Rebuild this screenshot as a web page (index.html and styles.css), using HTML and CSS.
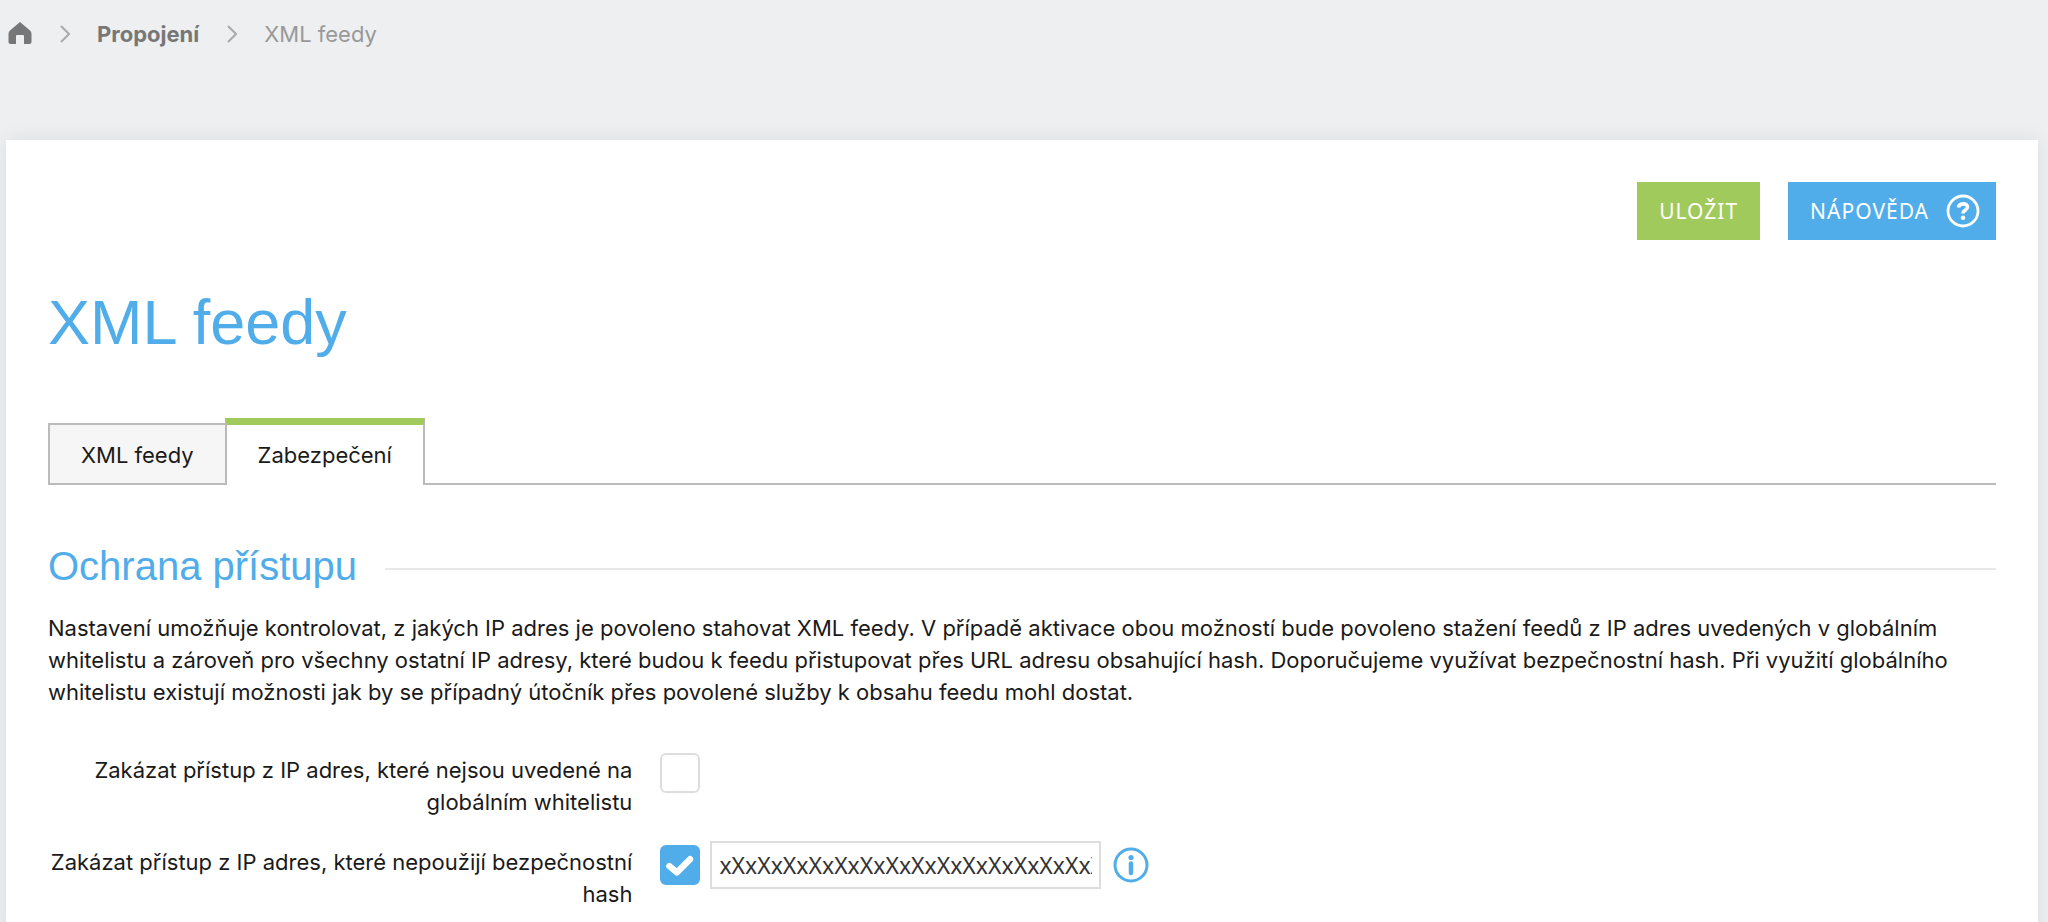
FILE: index.html
```html
<!DOCTYPE html>
<html lang="cs">
<head>
    <meta charset="UTF-8">
    <meta name="viewport" content="width=device-width, initial-scale=1">
    <title>XML feedy</title>
    <link rel="stylesheet" href="styles.css">
</head>
<body>
    <nav class="breadcrumbs">
        <a href="#" class="home" aria-label="Domů">
            <svg width="24" height="24" viewBox="0 0 24 24"><path d="M12 0 L22 8.500 Q23.500 9.800 23.500 12 V20 Q23.500 22 21.500 22 H16 V14 Q16 13 15 13 H9 Q8 13 8 14 V22 H2.500 Q0.500 22 0.500 20 V12 Q0.500 9.800 2 8.500 Z" fill="#777"/></svg>
        </a>
        <svg class="arrow" width="10" height="18" viewBox="0 0 10 18"><path d="M1 1 L9 9 L1 17"/></svg>
        <a href="#" class="parent">Propojení</a>
        <svg class="arrow" width="10" height="18" viewBox="0 0 10 18"><path d="M1 1 L9 9 L1 17"/></svg>
        <span>XML feedy</span>
    </nav>

    <main class="content">
        <div class="actions">
            <button type="submit" form="security" class="btn btn-save">Uložit</button>
            <button type="button" class="btn btn-help">Nápověda
                <svg width="34" height="34" viewBox="0 0 34 34" fill="none" stroke="#fff">
                    <circle cx="17" cy="17" r="15" stroke-width="2.800"/>
                    <path d="M12.500 13.500 C13 9 21.500 8.500 21.500 13 C21.500 16 17 16 17 19.500" stroke-width="3.600"/>
                    <circle cx="17" cy="23.800" r="2.200" fill="#fff" stroke="none"/>
                </svg>
            </button>
        </div>

        <h1>XML feedy</h1>

        <div class="tabs">
            <a href="#" class="tab">XML feedy</a>
            <a href="#" class="tab active">Zabezpečení</a>
        </div>

        <h2>Ochrana přístupu</h2>
        <p>Nastavení umožňuje kontrolovat, z jakých IP adres je povoleno stahovat XML feedy. V případě aktivace obou možností bude povoleno stažení feedů z IP adres uvedených v globálním whitelistu a zároveň pro všechny ostatní IP adresy, které budou k feedu přistupovat přes URL adresu obsahující hash. Doporučujeme využívat bezpečnostní hash. Při využití globálního whitelistu existují možnosti jak by se případný útočník přes povolené služby k obsahu feedu mohl dostat.</p>

        <form id="security">
            <div class="row">
                <label for="whitelist">Zakázat přístup z IP adres, které nejsou uvedené na globálním whitelistu</label>
                <div class="field">
                    <input type="checkbox" id="whitelist">
                </div>
            </div>
            <div class="row">
                <label for="use-hash">Zakázat přístup z IP adres, které nepoužijí bezpečnostní hash</label>
                <div class="field">
                    <input type="checkbox" id="use-hash" checked>
                    <input type="text" class="hash" aria-label="Hash" value="xXxXxXxXxXxXxXxXxXxXxXxXxXxXxXxXxX">
                    <button type="button" class="info" aria-label="Informace">
                        <svg width="36" height="36" viewBox="0 0 36 36" fill="none" stroke="#51ade9">
                            <circle cx="18" cy="18" r="16" stroke-width="3"/>
                            <path d="M18 16.500 V26" stroke-width="4.500" stroke-linecap="round"/>
                            <circle cx="18" cy="10.500" r="2.600" fill="#51ade9" stroke="none"/>
                        </svg>
                    </button>
                </div>
            </div>
        </form>
    </main>
</body>
</html>
```

FILE: styles.css
```css
* {
    box-sizing: border-box;
}

body {
    margin: 0;
    min-height: 100vh;
    display: flex;
    flex-direction: column;
    background: #edeff1;
    color: #1a1a1a;
    font-family: Inter, "Liberation Sans", sans-serif;
    font-size: 22px;
    line-height: 32px;
}

a {
    color: inherit;
    text-decoration: none;
}

button {
    border: none;
    cursor: pointer;
}

/* breadcrumbs */
.breadcrumbs {
    display: flex;
    align-items: center;
    height: 140px;
    padding: 0 8px 72px;
    color: #999;
}

.breadcrumbs svg {
    display: block;
}

.arrow {
    margin: 0 27px 0 28px;
    fill: none;
    stroke: #aaa;
    stroke-width: 2;
}

.parent {
    color: #777;
    font-weight: bold;
}

/* main panel */
.content {
    flex: 1;
    margin: 0 10px 0 6px;
    padding: 42px 42px 0;
    background: #fff;
    box-shadow: 0 0 20px rgba(0, 0, 0, 0.08);
}

.actions {
    display: flex;
    justify-content: flex-end;
    gap: 28px;
}

.btn {
    display: flex;
    align-items: center;
    gap: 17px;
    height: 58px;
    padding: 0 22px;
    color: #fff;
    font-family: "Noto Sans", sans-serif;
    font-size: 21px;
    letter-spacing: 1px;
    text-transform: uppercase;
}

.btn-save {
    background: #a0ca5c;
}

.btn-help {
    padding-right: 16px;
    background: #51ade9;
}

h1,
h2 {
    color: #51ade9;
    font-family: "Liberation Sans", Arial, sans-serif;
    font-weight: normal;
}

h1 {
    margin: 44px 0 58px;
    font-size: 63px;
    line-height: 76px;
}

/* tabs */
.tabs {
    display: flex;
    align-items: flex-end;
    border-bottom: 2px solid #bbb;
}

.tab {
    height: 60px;
    padding: 14px 31px;
    border: 2px solid #bbb;
    border-right: none;
    border-bottom: none;
    background: #f6f6f6;
}

.tab.active {
    height: 67px;
    margin-bottom: -2px;
    border-top: 7px solid #a0ca5c;
    border-right: 2px solid #bbb;
    background: #fff;
}

h2 {
    display: flex;
    align-items: center;
    gap: 28px;
    margin: 57px 0 22px;
    font-size: 40px;
    line-height: 48px;
}

h2::after {
    content: "";
    flex: 1;
    height: 2px;
    margin-top: 6px;
    background: #e8e8e8;
}

p {
    margin: 0 0 46px;
}

/* form */
.row {
    display: grid;
    grid-template-columns: 30% 1fr;
    gap: 28px;
    margin-bottom: 28px;
}

.row label {
    text-align: right;
}

.field {
    display: flex;
    align-items: center;
    height: 38px;
}

input[type="checkbox"] {
    appearance: none;
    width: 40px;
    height: 40px;
    margin: 0 10px 0 0;
    border: 2px solid #ddd;
    border-radius: 6px;
    background: #fff;
}

input[type="checkbox"]:checked {
    border-color: #51ade9;
    background: #51ade9 url("data:image/svg+xml,%3Csvg xmlns='http://www.w3.org/2000/svg' viewBox='0 0 34 34'%3E%3Cpath d='M7 18 L14 24 L26.500 11.500' fill='none' stroke='white' stroke-width='6' stroke-linecap='round' stroke-linejoin='round'/%3E%3C/svg%3E") center no-repeat;
}

.hash {
    width: 391px;
    height: 48px;
    padding: 0 7px;
    border: 2px solid #ddd;
    color: #333;
    font-family: "Noto Sans", sans-serif;
    font-size: 23px;
}

.info {
    margin-left: 12px;
    padding: 0;
    background: none;
}

.info svg {
    display: block;
}
```
